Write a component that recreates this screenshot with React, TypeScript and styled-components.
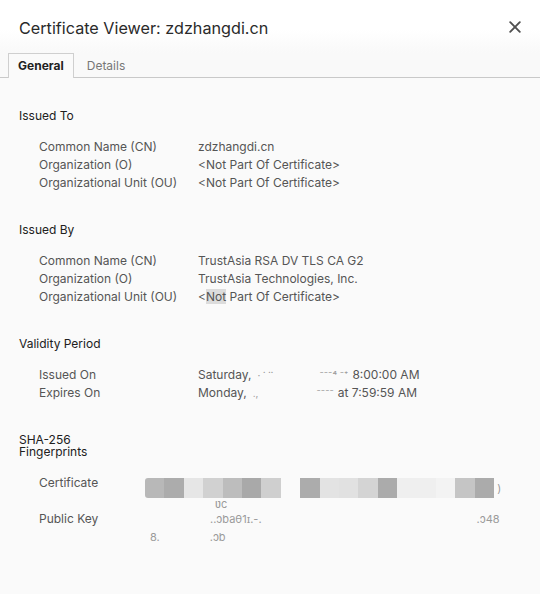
import React from 'react';
import styled, { createGlobalStyle } from 'styled-components';

const GlobalStyle = createGlobalStyle`
  html, body {
    margin: 0;
    padding: 0;
    background: #fafafa;
  }
  body {
    font-family: Inter, "Noto Sans", "Liberation Sans", sans-serif;
    -webkit-font-smoothing: antialiased;
  }
`;

const Dialog = styled.div`
  width: 540px;
  height: 594px;
  background: #fafafa;
  overflow: hidden;
`;

const Header = styled.div`
  display: flex;
  align-items: center;
  justify-content: space-between;
  height: 53px;
  padding: 0 19px 0 19px;
  box-sizing: border-box;
  background: linear-gradient(#ffffff 0%, #ffffff 55%, #f9f9f9 100%);
`;

const Title = styled.h1`
  margin: 2px 0 0;
  font-size: 16.2px;
  font-weight: 400;
  color: #2a2a2a;
`;

const Close = styled.button`
  display: flex;
  padding: 0;
  border: 0;
  background: none;
  cursor: pointer;
`;

const TabBar = styled.div`
  display: flex;
  gap: 3px;
  padding-left: 8px;
  border-bottom: 1px solid #c9c9c9;
  background: #f9f9f9;
`;

const Tab = styled.div<{ $active?: boolean }>`
  height: 23px;
  padding: 0 9px 1px;
  display: flex;
  align-items: center;
  font-size: 12px;
  font-weight: ${(p) => (p.$active ? 700 : 400)};
  color: ${(p) => (p.$active ? '#222' : '#777')};
  background: ${(p) => (p.$active ? '#fafafa' : 'transparent')};
  border: 1px solid ${(p) => (p.$active ? '#cfcfcf' : 'transparent')};
  border-bottom: 0;
  margin-bottom: -1px;
`;

const Content = styled.div`
  padding: 32px 19px 0;
  display: flex;
  flex-direction: column;
  gap: 32px;
`;

const Block = styled.section`
  display: flex;
  flex-direction: column;
  gap: 16px;
`;

const Heading = styled.h2<{ $narrow?: boolean }>`
  margin: 0;
  font-size: 12px;
  font-weight: 400;
  color: #202020;
  line-height: 12px;
  width: ${(p) => (p.$narrow ? '80px' : 'auto')};
`;

const Rows = styled.div`
  display: grid;
  grid-template-columns: 159px 1fr;
  padding-left: 20px;
`;

const Label = styled.div`
  font-size: 12px;
  line-height: 18px;
  color: #555;
  white-space: nowrap;
`;

const Value = styled.div`
  font-size: 12px;
  line-height: 18px;
  color: #555;
  white-space: nowrap;
`;

const Selected = styled.span`
  background: #dcdcdc;
`;

// blurred-out part of a date: a fixed-width run with faint leftovers on each side
const Redacted = styled.span<{ $w: number }>`
  display: inline-flex;
  justify-content: space-between;
  width: ${(p) => p.$w}px;
  padding: 0 4px 0 6px;
  box-sizing: border-box;
  color: #9a9a9a;
  font-size: 10px;
  vertical-align: top;
`;

const Smudge = styled.span`
  color: #9a9a9a;
  font-size: 11px;
`;

const Blank = styled.span<{ $w: number }>`
  display: inline-block;
  width: ${(p) => p.$w}px;
`;

const Hash = styled.div`
  margin-left: -53px;
`;

const Mosaic = styled.div`
  display: flex;
  align-items: center;
  height: 20px;
  margin-top: 4px;
`;

const Tile = styled.div<{ $c: string }>`
  width: 19.4px;
  height: 20px;
  background: ${(p) => p.$c};
  &:first-child {
    border-radius: 3px 0 0 3px;
  }
`;

const FaintLine = styled.div<{ $h?: number }>`
  font-size: 11px;
  line-height: ${(p) => p.$h ?? 18}px;
  height: ${(p) => p.$h ?? 18}px;
  white-space: nowrap;
`;

type Field = { label: string; value: React.ReactNode };

const issuedTo: Field[] = [
  { label: 'Common Name (CN)', value: 'zdzhangdi.cn' },
  { label: 'Organization (O)', value: '<Not Part Of Certificate>' },
  { label: 'Organizational Unit (OU)', value: '<Not Part Of Certificate>' },
];

const issuedBy: Field[] = [
  { label: 'Common Name (CN)', value: 'TrustAsia RSA DV TLS CA G2' },
  { label: 'Organization (O)', value: 'TrustAsia Technologies, Inc.' },
  {
    label: 'Organizational Unit (OU)',
    value: (
      <>
        &lt;<Selected>Not</Selected> Part Of Certificate&gt;
      </>
    ),
  },
];

const validity: Field[] = [
  {
    label: 'Issued On',
    value: (
      <>
        Saturday,
        <Redacted $w={101}>
          <span>· ˙ ˙˙</span>
          <span>⁻⁻⁻⁴ ⁻⁺</span>
        </Redacted>
        8:00:00 AM
      </>
    ),
  },
  {
    label: 'Expires On',
    value: (
      <>
        Monday,
        <Redacted $w={91}>
          <span>.,</span>
          <span>⁻⁻⁻⁻</span>
        </Redacted>
        at 7:59:59 AM
      </>
    ),
  },
];

// grey mosaic used to hide the certificate hash
const mosaic = [
  '#b8b8b8', '#acacac', '#e6e6e6', '#d1d1d1', '#bdbdbd', '#a9a9a9', '#cfcfcf',
  'transparent',
  '#acacac', '#e3e3e3', '#e1e1e1', '#d4d4d4', '#ababab', '#efefef', '#efefef', '#f3f3f3',
  '#c5c5c5', '#ababab',
];

const Section: React.FC<{ title: string; rows: Field[] }> = ({ title, rows }) => (
  <Block>
    <Heading>{title}</Heading>
    <Rows>
      {rows.map((r) => (
        <React.Fragment key={r.label}>
          <Label>{r.label}</Label>
          <Value>{r.value}</Value>
        </React.Fragment>
      ))}
    </Rows>
  </Block>
);

const App: React.FC = () => {
  return (
    <React.Fragment>
      <GlobalStyle />
      <Dialog>
        <Header>
          <Title>Certificate Viewer: zdzhangdi.cn</Title>
          <Close aria-label="Close">
            <svg width="12" height="12" viewBox="0 0 12 12">
              <path d="M1.2 1.2L10.8 10.8M10.8 1.2L1.2 10.8" stroke="#505050" strokeWidth="1.9" strokeLinecap="round" />
            </svg>
          </Close>
        </Header>
        <TabBar>
          <Tab $active>General</Tab>
          <Tab>Details</Tab>
        </TabBar>
        <Content>
          <Section title="Issued To" rows={issuedTo} />
          <Section title="Issued By" rows={issuedBy} />
          <Section title="Validity Period" rows={validity} />
          <Block>
            <Heading $narrow>SHA-256 Fingerprints</Heading>
            <Rows>
              <Label>Certificate</Label>
              <Hash>
                <Mosaic>
                  {mosaic.map((c, i) => (
                    <Tile key={i} $c={c} />
                  ))}
                  <Smudge>&nbsp;)</Smudge>
                </Mosaic>
                <FaintLine $h={12}>
                  <Blank $w={70} />
                  <Smudge>ʋc</Smudge>
                </FaintLine>
              </Hash>
              <Label>Public Key</Label>
              <Hash>
                <FaintLine>
                  <Blank $w={65} />
                  <Smudge>..ɔbaθ1ɪ.-.</Smudge>
                  <Blank $w={215} />
                  <Smudge>.ɔ48</Smudge>
                </FaintLine>
                <FaintLine>
                  <Blank $w={5} />
                  <Smudge>8.</Smudge>
                  <Blank $w={50} />
                  <Smudge>.ɔb</Smudge>
                </FaintLine>
              </Hash>
            </Rows>
          </Block>
        </Content>
      </Dialog>
    </React.Fragment>
  );
};

export default App;
